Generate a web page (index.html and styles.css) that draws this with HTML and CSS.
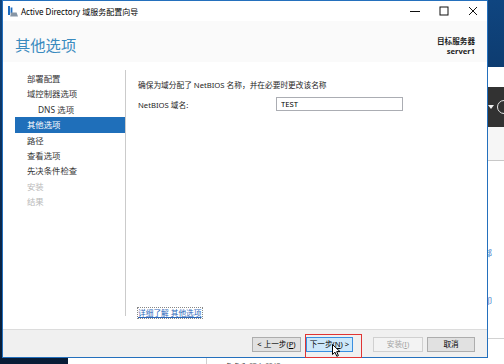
FILE: index.html
```html
<!DOCTYPE html>
<html lang="zh-CN">
<head>
    <meta charset="UTF-8">
    <meta name="viewport" content="width=device-width, initial-scale=1.0">
    <title>Active Directory 域服务配置向导</title>
    <link rel="stylesheet" href="styles.css">
</head>
<body>
    <!-- Server Manager window behind the wizard -->
    <div class="srv">
        <div class="srv-title"></div>
        <div class="srv-toolbar">
            <span class="srv-caret"></span>
            <span class="srv-ring"></span>
        </div>
        <div class="srv-strip"></div>
        <div class="srv-main">
            <span class="srv-link">部</span>
            <span class="srv-link">印</span>
        </div>
        <div class="srv-lower">
            <div class="srv-side"></div>
            <div class="srv-text">角色和服务器组</div>
        </div>
    </div>

    <!-- Wizard window -->
    <div class="wiz">
        <div class="titlebar">
            <svg class="app-icon" width="10" height="11" viewBox="0 0 10 11">
                <rect x="0" y="0" width="2" height="9" fill="#1d6cc0"/>
                <rect x="2.6" y="1.5" width="1.8" height="6" fill="#1d6cc0"/>
                <path d="M3 6.5 L8.6 6.5 L10 10.5 L2.2 10.5 Z" fill="#8796a6"/>
            </svg>
            <span class="title-text">Active Directory 域服务配置向导</span>
            <div class="controls">
                <span class="ctl">
                    <svg width="10" height="10" viewBox="0 0 10 10"><path d="M0 5.5 H10" stroke="#111" stroke-width="1"/></svg>
                </span>
                <span class="ctl">
                    <svg width="10" height="10" viewBox="0 0 10 10"><rect x="1" y="1" width="8" height="8" fill="none" stroke="#111" stroke-width="1"/></svg>
                </span>
                <span class="ctl">
                    <svg width="10" height="10" viewBox="0 0 10 10"><path d="M1 1 L9 9 M9 1 L1 9" stroke="#111" stroke-width="1"/></svg>
                </span>
            </div>
        </div>

        <header class="wiz-head">
            <h1>其他选项</h1>
            <div class="target">
                <div>目标服务器</div>
                <div>server1</div>
            </div>
        </header>

        <div class="wiz-body">
            <nav class="steps">
                <div class="step">部署配置</div>
                <div class="step">域控制器选项</div>
                <div class="step sub">DNS 选项</div>
                <div class="step on">其他选项</div>
                <div class="step">路径</div>
                <div class="step">查看选项</div>
                <div class="step">先决条件检查</div>
                <div class="step off">安装</div>
                <div class="step off">结果</div>
            </nav>

            <main class="pane">
                <p class="intro">确保为域分配了 NetBIOS 名称，并在必要时更改该名称</p>
                <div class="field">
                    <label for="netbios">NetBIOS 域名:</label>
                    <input id="netbios" type="text" value="TEST">
                </div>
                <a class="more" href="#">详细了解 其他选项</a>
            </main>
        </div>

        <footer class="wiz-foot">
            <button class="btn">&lt; 上一步(<u>P</u>)</button>
            <button class="btn next">下一步(<u>N</u>) &gt;</button>
            <button class="btn off">安装(<u>I</u>)</button>
            <button class="btn">取消</button>

            <!-- red annotation box and mouse pointer -->
            <span class="mark"></span>
            <svg class="cursor" width="9" height="13" viewBox="0 0 9 13">
                <path d="M0.5 0.5 L0.5 10.5 L3 8.2 L4.8 12.3 L6.4 11.6 L4.7 7.6 L8 7.6 Z" fill="#fff" stroke="#000" stroke-width="1" stroke-linejoin="round"/>
            </svg>
        </footer>
    </div>
</body>
</html>
```

FILE: styles.css
```css
/* General */
* {
    box-sizing: border-box;
}

body {
    margin: 0;
    width: 504px;
    height: 364px;
    overflow: hidden;
    position: relative;
    background: linear-gradient(to bottom, #0f4580, #0b2a50 55%, #081c36);
    font-family: "Noto Sans", "Noto Sans CJK SC", sans-serif;
}

/* Server Manager (background window) */
.srv {
    position: absolute;
    left: 68px;
    top: 67px;
    width: 450px;
    height: 310px;
    background: #fff;
    display: flex;
    flex-direction: column;
}

.srv-title {
    height: 20px;
    background: #fff;
}

.srv-toolbar {
    height: 40px;
    background: #323232;
    display: flex;
    align-items: center;
    justify-content: flex-end;
    gap: 3px;
    padding-right: 7px;
}

.srv-caret {
    width: 0;
    height: 0;
    border-left: 3px solid transparent;
    border-right: 3px solid transparent;
    border-top: 4px solid #f0f0f0;
}

.srv-ring {
    width: 14px;
    height: 14px;
    border: 1.5px solid #e6e6e6;
    border-radius: 50%;
}

.srv-strip {
    height: 34px;
    background: #f6f6f6;
    border-bottom: 1px solid #c8c8c8;
}

.srv-main {
    height: 178px;
    border-bottom: 1px solid #d2d2d2;
    display: flex;
    flex-direction: column;
    align-items: flex-start;
    gap: 38px;
    padding: 87px 0 0 416px;
}

.srv-link {
    font-size: 8px;
    line-height: 10px;
    color: #2a6fc4;
}

.srv-lower {
    flex: 1;
    display: flex;
}

.srv-side {
    width: 139px;
    border-right: 1px solid #d0d0d0;
}

.srv-text {
    padding: 23px 0 0 18px;
    font-size: 8px;
    line-height: 10px;
    color: #444;
}

/* Wizard window */
.wiz {
    position: absolute;
    left: 2px;
    top: 0;
    width: 486px;
    height: 358px;
    border: 1px solid #2470bd;
    background: #fff;
    display: flex;
    flex-direction: column;
}

.titlebar {
    height: 20px;
    display: flex;
    align-items: center;
    padding-left: 5px;
    background: #fff;
}

.app-icon {
    margin-right: 3px;
}

.title-text {
    font-size: 8px;
    color: #000;
}

.controls {
    margin-left: auto;
    display: flex;
}

.ctl {
    width: 29px;
    height: 20px;
    display: flex;
    align-items: center;
    justify-content: center;
}

/* Header */
.wiz-head {
    height: 41px;
    background: #fafafa;
    display: flex;
    justify-content: space-between;
    align-items: flex-start;
    padding: 15px 12px 0 12px;
}

.wiz-head h1 {
    margin: 0;
    font-size: 15.3px;
    line-height: 18px;
    font-weight: normal;
    color: #3a8bbf;
}

.target {
    text-align: right;
    font-size: 7.6px;
    line-height: 10px;
    font-weight: bold;
    color: #1e1e1e;
}

/* Body */
.wiz-body {
    flex: 1;
    display: flex;
}

.steps {
    width: 123px;
    margin: 8px 0 13px;
    padding-top: 1px;
    border-right: 1px solid #cbcbcb;
}

.step {
    height: 15.4px;
    line-height: 15.4px;
    margin-left: 12px;
    padding-left: 12px;
    font-size: 8.4px;
    color: #333;
}

.step.sub {
    padding-left: 23px;
}

.step.on {
    background: #1f6fba;
    color: #fff;
}

.step.off {
    color: #b9b9b9;
}

.pane {
    flex: 1;
    display: flex;
    flex-direction: column;
    padding: 18px 0 11px 12px;
}

.intro {
    margin: 0;
    font-size: 7.7px;
    line-height: 10px;
    color: #1e1e1e;
}

.field {
    display: flex;
    align-items: center;
    margin-top: 7px;
}

.field label {
    width: 138px;
    font-size: 7.7px;
    color: #1e1e1e;
}

.field input {
    width: 127px;
    height: 14px;
    border: 1px solid #abadb3;
    padding: 0 4px;
    font-family: inherit;
    font-size: 7.7px;
    color: #000;
    outline: none;
}

.more {
    margin-top: auto;
    align-self: flex-start;
    font-size: 7.7px;
    line-height: 10px;
    color: #2a66b8;
    text-decoration: underline;
    outline: 1px dotted #888;
}

/* Footer */
.wiz-foot {
    position: relative;
    height: 28px;
    background: #f0f0f0;
    border-top: 1px solid #dcdcdc;
    display: flex;
    justify-content: flex-end;
    align-items: flex-start;
    padding: 7px 12px 0 0;
}

.btn {
    height: 15px;
    padding: 0;
    border: 1px solid #adadad;
    background: #e1e1e1;
    color: #000;
    font-family: inherit;
    font-size: 7.6px;
    line-height: 13px;
}

.btn:nth-child(1) {
    width: 49px;
}

.btn.next {
    width: 47px;
    margin-left: 5px;
    background: #cde8fa;
    border-color: #3a8ee0;
}

.btn.off {
    width: 50px;
    margin-left: 20px;
    background: #f3f3f3;
    border-color: #d0d0d0;
    color: #a3a3a3;
}

.btn:nth-child(4) {
    width: 48px;
    margin-left: 4px;
}

.mark {
    position: absolute;
    left: 302px;
    top: 4px;
    width: 57px;
    height: 24px;
    border: 1px solid #e03434;
}

.cursor {
    position: absolute;
    left: 329px;
    top: 14px;
}
```
